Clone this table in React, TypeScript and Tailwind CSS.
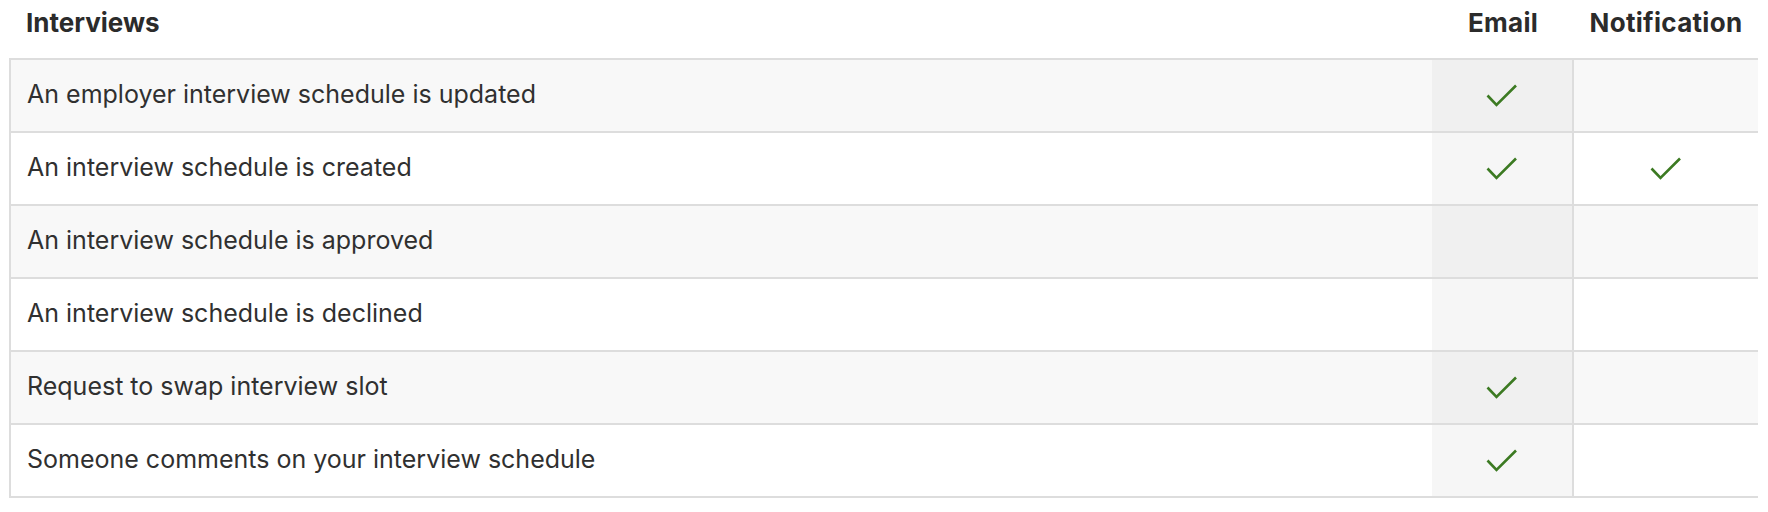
import React from "react";

const rows: { label: string; email: boolean; notif: boolean }[] = [
  { label: "An employer interview schedule is updated", email: true, notif: false },
  { label: "An interview schedule is created", email: true, notif: true },
  { label: "An interview schedule is approved", email: false, notif: false },
  { label: "An interview schedule is declined", email: false, notif: false },
  { label: "Request to swap interview slot", email: true, notif: false },
  { label: "Someone comments on your interview schedule", email: true, notif: false },
];

function Check() {
  return (
    <svg width="31" height="23" viewBox="0 0 31 23" fill="none" className="block">
      <polyline
        points="1.5,11.5 10.5,21 30,1.5"
        stroke="#3c7a22"
        strokeWidth="2.6"
        strokeLinecap="butt"
        strokeLinejoin="miter"
      />
    </svg>
  );
}

export default function App() {
  return (
    <div
      className="w-[1768px] h-[512px] bg-white text-[#303030]"
      style={{ fontFamily: "Inter, 'Noto Sans', sans-serif" }}
    >
      <div className="ml-[9px] w-[1749px]">
        <div className="flex h-[58px] text-[26px] font-bold leading-[32px] text-[#2b2b2b]">
          <div className="flex-1 pl-[17px] pt-[7px]">Interviews</div>
          <div className="w-[142px] text-center pt-[7px] tracking-[0.3px]">Email</div>
          <div className="w-[184px] text-center pt-[7px] tracking-[0.3px]">Notification</div>
        </div>
        <div className="border-t-2 border-l-2 border-[#dddddd]">
          {rows.map((r, i) => {
            const odd = i % 2 === 0;
            return (
              <div
                key={i}
                className={`flex h-[73px] border-b-2 border-[#dddddd] ${odd ? "bg-[#f8f8f8]" : "bg-white"}`}
              >
                <div className="flex-1 pl-[16px] pt-[19px] text-[25px] leading-[30px]">{r.label}</div>
                <div
                  className={`w-[142px] border-r-2 border-[#dddddd] flex items-center justify-center pr-[2px] ${
                    odd ? "bg-[#f0f0f0]" : "bg-[#f6f6f6]"
                  }`}
                >
                  {r.email && <Check />}
                </div>
                <div className="w-[184px] flex items-center justify-center pr-[2px]">
                  {r.notif && <Check />}
                </div>
              </div>
            );
          })}
        </div>
      </div>
    </div>
  );
}
